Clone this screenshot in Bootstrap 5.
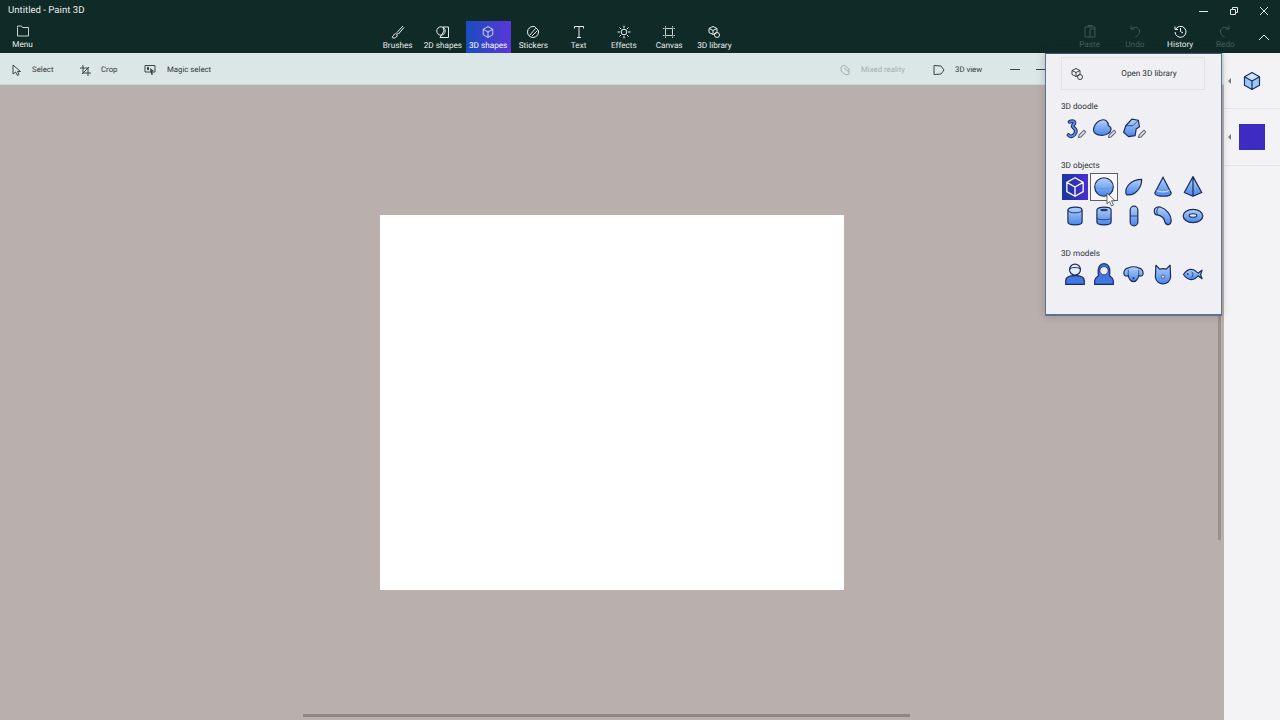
<!DOCTYPE html>
<html lang="en">
<head>
<meta charset="UTF-8">
<title>Untitled - Paint 3D</title>
<link href="https://cdn.jsdelivr.net/npm/bootstrap@5.3.0/dist/css/bootstrap.min.css" rel="stylesheet">
<style>
html, body { height: 100%; overflow: hidden; }
body { font-family: Roboto, "Liberation Sans", sans-serif; font-size: 8.2px; background: #b9afac; color: #23272b; text-rendering: geometricPrecision; }
.app-shell { width: 1280px; height: 720px; position: relative; }
.top-bar { height: 53px; background: #0f2a27; color: #e8eeec; }
.title-row { height: 21px; padding-left: 8px; padding-top: 1px; font-size: 9.6px; }
.win-btn { width: 30px; }
.rib-row { height: 32px; }
.rib-left { width: 375px; }
.rib-center { width: 362px; }
.rib-center .rib-btn { padding-top: 4px; }
.rib-btn { width: 45.25px; height: 32px; padding-top: 3px; line-height: 11px; color: #e8eeec; white-space: nowrap; }
.rib-btn svg { display: block; height: 14px; width: 16px; margin-bottom: 2px; }
.rib-btn.is-active { background: linear-gradient(90deg, #1a4dbd, #5a36d9); color: #fff; }
.rib-btn.is-off { color: #44605b; }
.rib-right { margin-left: 330px; }
.chev-box { margin-left: 10px; padding-top: 12px; }
.work-row { height: 667px; }
.main-col { width: 1224px; }
.tool-bar { height: 32px; background: #dbe6e6; border-bottom: 1px solid #cfd3d2; color: #31383c; padding-left: 8px; padding-right: 178px; font-size: 7.8px; }
.tool-item { height: 31px; padding-top: 3px; }
.tool-icon { width: 14px; margin-right: 10px; display: flex; justify-content: center; }
.tool-off { color: #a4afaf; }
.zoom-dash { width: 10px; height: 1px; background: #3b4347; margin-top: 1px; }
.canvas-pane { height: 635px; position: relative; }
.paper-sheet { width: 464px; height: 375px; background: #fff; }
.h-scroll { position: absolute; left: 303px; top: 629px; width: 607px; height: 3px; background: #8f8785; }
.v-scroll { position: absolute; left: 1218px; top: 230px; width: 3px; height: 225px; background: #9a908d; }
.side-pane { width: 56px; background: #f3f3f6; }
.side-block { position: relative; border-bottom: 1px solid #e6e6ea; }
.side-arrow { position: absolute; left: 4px; top: 50%; margin-top: -3px; width: 0; height: 0; border-style: solid; border-width: 3px 3px 3px 0; border-color: transparent #7a7f85 transparent transparent; }
.swatch-box { width: 26px; height: 26px; background: #3d2bc4; border: 1px solid #3b2fa8; }
.shape-pop { position: absolute; left: 1045px; top: 53px; width: 177px; height: 263px; background: #f0f0f4; border: 1px solid #5d7290; border-bottom-width: 2px; border-top-color: #40587a; padding: 3px 16px 0 15px; box-shadow: 0 0 8px rgba(60,50,50,.25); color: #2b3034; }
.lib-btn { width: 144px; height: 33px; border: 1px solid #e3e3e7; position: relative; padding-left: 32px; padding-top: 1px; }
.lib-btn svg { position: absolute; left: 8px; top: 9px; }
.pop-head { height: 12px; line-height: 12px; }
.icon-grid { display: grid; grid-template-columns: repeat(5, 26px); column-gap: 3.4px; row-gap: 3px; margin-left: 1px; }
.icon-cell { width: 26px; height: 26px; display: flex; align-items: center; justify-content: center; }
.icon-cell svg { width: 24px; height: 24px; }
.icon-cell svg.icon-small { width: 21px; height: 21px; }
.icon-cell.is-picked { background: linear-gradient(90deg, #17379f, #4a2fd0); }
.icon-cell.is-hover { outline: 1px solid #5b5f68; background: #f8f8fa; }
.mouse-arrow { position: absolute; left: 1106px; top: 192px; }
</style>
</head>
<body>
<svg width="0" height="0" class="position-absolute">
  <defs>
    <linearGradient id="blu" x1="0" y1="0" x2="0" y2="1"><stop offset="0" stop-color="#b2d2f8"/><stop offset="1" stop-color="#4a86ea"/></linearGradient>
    <symbol id="cube" viewBox="0 0 22 22"><path d="M11 2.500 18.500 6.700V15.300L11 19.500 3.500 15.300V6.700Z M3.500 6.700 11 11 18.500 6.700 M11 11V19.500" fill="none" stroke="currentColor" stroke-width="1.200" stroke-linejoin="round"/></symbol>
    <symbol id="lib" viewBox="0 0 14 14"><path d="M6 1.500 10 3.500V7.500L6 9.500 2 7.500V3.500Z M2 3.500 6 5.500 10 3.500 M6 5.500V9.500" fill="none" stroke="currentColor" stroke-width="1"/><circle cx="10" cy="10" r="2.500" fill="none" stroke="currentColor"/></symbol>
    <symbol id="pen" viewBox="0 0 8 8"><path d="M1 7 1.500 5 5.500 1 7 2.500 3 6.500Z" fill="#e4e4ea" stroke="#666b76" stroke-width=".9"/></symbol>
  </defs>
</svg>

<div class="app-shell">
  <header class="top-bar">
    <div class="title-row d-flex justify-content-between align-items-center">
      <span>Untitled - Paint 3D</span>
      <div class="d-flex align-items-center">
        <div class="win-btn d-flex justify-content-center"><svg width="10" height="10"><path d="M0 5.500H9" stroke="#dfe6e4"/></svg></div>
        <div class="win-btn d-flex justify-content-center"><svg width="10" height="10"><path d="M1.500 3.500H6.500V8.500H1.500Z M3.500 3V1.500H8.500V6.500H7" fill="none" stroke="#dfe6e4"/></svg></div>
        <div class="win-btn d-flex justify-content-center" style="margin-right:1px"><svg width="10" height="10"><path d="M1 1 9 9M9 1 1 9" stroke="#dfe6e4"/></svg></div>
      </div>
    </div>
    <div class="rib-row d-flex">
      <div class="rib-left">
        <div class="rib-btn d-flex flex-column align-items-center"><svg viewBox="0 0 16 14"><path d="M2.500 3.500V2H6.500L7.500 3.500H13.500V12H2.500Z" fill="none" stroke="#c9d2d0"/></svg>Menu</div>
      </div>
      <nav class="rib-center d-flex">
        <div class="rib-btn d-flex flex-column align-items-center"><svg viewBox="0 0 16 14"><path d="M13 1 7 7.500 M4 13C2.500 13 2 12.500 2 12 3.500 11.500 3.500 10 4.500 9 6 8 8 9.500 7 11 6.500 12.500 5 13 4 13Z M7 7.500 8.500 9 14 2.500" fill="none" stroke="#e8eeec"/></svg>Brushes</div>
        <div class="rib-btn d-flex flex-column align-items-center"><svg viewBox="0 0 16 14"><circle cx="6" cy="6" r="4.200" fill="none" stroke="#e8eeec"/><path d="M8 2H13.500V12.500H5L9 6Z" fill="none" stroke="#e8eeec"/></svg>2D shapes</div>
        <div class="rib-btn is-active d-flex flex-column align-items-center"><svg viewBox="0 0 22 22"><use href="#cube" color="#fff"/></svg>3D shapes</div>
        <div class="rib-btn d-flex flex-column align-items-center"><svg viewBox="0 0 16 14"><path d="M8 1.500A5.500 5.500 0 1 0 13.500 7 L13.500 5.500 9.500 1.500Z M4.500 10.500 10.500 3.500 M7 11 12.500 5.500" fill="none" stroke="#e8eeec"/></svg>Stickers</div>
        <div class="rib-btn d-flex flex-column align-items-center"><svg viewBox="0 0 16 14"><path d="M3.500 3.500V1.500H12.500V3.500 M8 1.500V12.500 M6 12.500H10" fill="none" stroke="#e8eeec"/></svg>Text</div>
        <div class="rib-btn d-flex flex-column align-items-center"><svg viewBox="0 0 16 14"><circle cx="8" cy="7" r="2.800" fill="none" stroke="#e8eeec"/><path d="M8 .5V3M8 11V13.500M1.500 7H4M12 7H14.500M3.500 2.500 5.200 4.200M10.800 9.800 12.500 11.500M12.500 2.500 10.800 4.200M5.200 9.800 3.500 11.500" stroke="#e8eeec"/></svg>Effects</div>
        <div class="rib-btn d-flex flex-column align-items-center"><svg viewBox="0 0 16 14"><path d="M4.500 3.500H11.500V10.500H4.500Z" fill="none" stroke="#c9d2d0"/><path d="M4.500 1V2.500M11.500 1V2.500M4.500 11.500V13M11.500 11.500V13M2 3.500H3.500M2 10.500H3.500M12.500 3.500H14M12.500 10.500H14" stroke="#c9d2d0"/></svg>Canvas</div>
        <div class="rib-btn d-flex flex-column align-items-center"><svg viewBox="0 0 14 14"><use href="#lib" color="#e8eeec"/></svg>3D library</div>
      </nav>
      <div class="rib-right d-flex flex-grow-1">
        <div class="rib-btn is-off d-flex flex-column align-items-center"><svg viewBox="0 0 16 14"><path d="M3 3H13V13H3Z M6 3V1.500H10V3 M8 5V13 M8 5H13" fill="none" stroke="#3d5954"/></svg>Paste</div>
        <div class="rib-btn is-off d-flex flex-column align-items-center"><svg viewBox="0 0 16 14"><path d="M4 1.500V5H7.500 M4.500 5C6 2.500 12 2.500 12.500 7 12.800 9.500 11 12 8.500 13" fill="none" stroke="#3d5954"/></svg>Undo</div>
        <div class="rib-btn d-flex flex-column align-items-center"><svg viewBox="0 0 16 14"><path d="M3 2.500V5.500H6 M3.500 5.500A5.500 5.500 0 1 1 3 8 M8.500 4V7.500L11 9" fill="none" stroke="#f2f5f4"/></svg>History</div>
        <div class="rib-btn is-off d-flex flex-column align-items-center"><svg viewBox="0 0 16 14"><path d="M12 1.500V5H8.500 M11.500 5C10 2.500 4 2.500 3.500 7 3.200 9.500 5 12 7.500 13" fill="none" stroke="#3d5954"/></svg>Redo</div>
        <div class="chev-box"><svg width="12" height="9" class="d-block"><path d="M1 7 6 2 11 7" fill="none" stroke="#f2f5f4"/></svg></div>
      </div>
    </div>
  </header>

  <div class="work-row d-flex">
    <div class="main-col">
      <div class="tool-bar d-flex justify-content-between">
        <div class="d-flex">
          <div class="tool-item d-flex align-items-center" style="width:70px"><span class="tool-icon"><svg width="10" height="12" class="ms-1"><path d="M1 1V10L3.500 8 5.500 11.500 7 10.500 5.500 7.500H8.500Z" fill="none" stroke="#3b4347"/></svg></span>Select</div>
          <div class="tool-item d-flex align-items-center" style="width:65px"><span class="tool-icon" style="margin-right:9px"><svg width="11" height="11"><path d="M3 0V8H11 M0 3H8V11 M2 9 9 2" fill="none" stroke="#3b4347"/></svg></span>Crop</div>
          <div class="tool-item d-flex align-items-center"><span class="tool-icon"><svg width="12" height="12"><path d="M1 1.500H11V8H1Z" fill="none" stroke="#3b4347"/><path d="M6 4 10 7 8 7.500 9 10.500 7.500 11 6.500 8Z M3 3H5V6H3Z" fill="#3b4347"/></svg></span>Magic select</div>
        </div>
        <div class="d-flex align-items-center">
          <div class="tool-item tool-off d-flex align-items-center" style="width:94px"><span class="tool-icon" style="margin-right:9px"><svg width="10" height="12"><path d="M1 3 4 1 9 5V10L6 11 1 7Z M4 4 9 8" fill="none" stroke="#a4afaf"/></svg></span>Mixed reality</div>
          <div class="tool-item d-flex align-items-center" style="width:78px"><span class="tool-icon" style="margin-right:9px"><svg width="12" height="12"><path d="M1 1.500 8 2 11 6 8 10 1 10.500Z" fill="none" stroke="#3b4347"/></svg></span>3D view</div>
          <div class="zoom-dash"></div>
          <div class="zoom-dash ms-3"></div>
        </div>
      </div>
      <main class="canvas-pane d-flex align-items-center justify-content-center">
        <div class="paper-sheet"></div>
        <div class="h-scroll"></div>
        <div class="v-scroll"></div>
      </main>
    </div>
    <aside class="side-pane">
      <div class="side-block d-flex align-items-center justify-content-center" style="height:56px">
        <span class="side-arrow"></span>
        <svg width="22" height="22" viewBox="0 0 22 22"><path d="M11 2.500 18.500 6.700V15.300L11 19.500 3.500 15.300V6.700Z" fill="#9cc6f5"/><path d="M3.500 6.700 11 11 18.500 6.700 11 2.500Z" fill="#cfe3fa"/><use href="#cube" color="#16305f"/></svg>
      </div>
      <div class="side-block d-flex align-items-center justify-content-center" style="height:57px">
        <span class="side-arrow"></span>
        <div class="swatch-box"></div>
      </div>
    </aside>
  </div>

  <div class="shape-pop">
    <div class="lib-btn d-flex align-items-center justify-content-center">
      <svg width="14" height="14"><use href="#lib" color="#3b3f45"/></svg>
      <span>Open 3D library</span>
    </div>
    <div class="pop-head" style="margin-top:11px">3D doodle</div>
    <div class="icon-grid" style="margin-top:3px">
      <div class="icon-cell"><svg viewBox="0 0 22 22"><path d="M6 4.500C9.500 2.500 12 5 9.500 7 6.500 9.500 13.500 10 11.500 14.500 10 18 6.500 18.500 5 16.500" fill="none" stroke="#1c2b5c" stroke-width="3.400" stroke-linecap="round"/><path d="M6 4.500C9.500 2.500 12 5 9.500 7 6.500 9.500 13.500 10 11.500 14.500 10 18 6.500 18.500 5 16.500" fill="none" stroke="#5a90ea" stroke-width="1.600" stroke-linecap="round"/><use href="#pen" x="13" y="11" width="9" height="9"/></svg></div>
      <div class="icon-cell"><svg viewBox="0 0 22 22"><path d="M8 3C12 1.500 15 4 15 8 18 9 18.500 13 15 15 11 18 4 17 2 14 0 10 4 4 8 3Z" fill="url(#blu)" stroke="#1c2b5c" stroke-width="1.100"/><use href="#pen" x="14" y="11" width="9" height="9"/></svg></div>
      <div class="icon-cell"><svg viewBox="0 0 22 22"><path d="M9 2 15 3 16 9 13 11 12 17 6 18 1.500 14 3.500 8Z" fill="url(#blu)" stroke="#1c2b5c" stroke-width="1.100" stroke-linejoin="round"/><path d="M15 3 10 8 3.500 8" fill="none" stroke="#1c2b5c" stroke-width=".7"/><use href="#pen" x="14" y="11" width="9" height="9"/></svg></div>
    </div>
    <div class="pop-head" style="margin-top:18px">3D objects</div>
    <div class="icon-grid" style="margin-top:2px">
      <div class="icon-cell is-picked"><svg viewBox="0 0 22 22"><use href="#cube" color="#fff"/></svg></div>
      <div class="icon-cell is-hover"><svg viewBox="0 0 22 22"><circle cx="11" cy="11" r="8.500" fill="url(#blu)" stroke="#1c2b5c" stroke-width="1.100"/><path d="M3 11C6 13 16 13 19 11" fill="none" stroke="#5f93e6" stroke-width=".8"/></svg></div>
      <div class="icon-cell"><svg viewBox="0 0 22 22"><path d="M4 18C1.500 11 9 4 18 4 18.500 11 12 20 4 18Z" fill="url(#blu)" stroke="#1c2b5c" stroke-width="1.100"/></svg></div>
      <div class="icon-cell"><svg viewBox="0 0 22 22"><path d="M11 2 18.500 16.500C18.500 20.500 3.500 20.500 3.500 16.500Z" fill="url(#blu)" stroke="#1c2b5c" stroke-width="1.100"/><path d="M5 14C8 16 14 16 17 14" fill="none" stroke="#fff" stroke-width=".7"/></svg></div>
      <div class="icon-cell"><svg viewBox="0 0 22 22"><path d="M11 1.500 19 16 11 19.500 3 16Z M11 1.500V19.500" fill="url(#blu)" stroke="#1c2b5c" stroke-width="1.100" stroke-linejoin="round"/></svg></div>
      <div class="icon-cell"><svg viewBox="0 0 22 22"><path d="M4.500 5.500V16.500C4.500 20 17.500 20 17.500 16.500V5.500C17.500 2 4.500 2 4.500 5.500Z" fill="url(#blu)" stroke="#1c2b5c" stroke-width="1.100"/><path d="M4.500 5.500C4.500 9 17.500 9 17.500 5.500" fill="none" stroke="#1c2b5c" stroke-width=".8"/></svg></div>
      <div class="icon-cell"><svg viewBox="0 0 22 22"><path d="M4.500 5.500V16.500C4.500 20 17.500 20 17.500 16.500V5.500C17.500 2 4.500 2 4.500 5.500Z" fill="url(#blu)" stroke="#1c2b5c" stroke-width="1.100"/><ellipse cx="11" cy="5.500" rx="3.500" ry="1.200" fill="#24386e"/><path d="M4.500 13C7 15 15 15 17.500 13" fill="none" stroke="#1c2b5c" stroke-width=".7"/></svg></div>
      <div class="icon-cell"><svg viewBox="0 0 22 22"><rect x="7.500" y="2" width="7" height="18" rx="3.500" fill="url(#blu)" stroke="#1c2b5c" stroke-width="1.100"/><path d="M7.500 11H14.500" stroke="#1c2b5c" stroke-width=".7"/></svg></div>
      <div class="icon-cell"><svg viewBox="0 0 22 22"><path d="M3 6C3 3 7 2 9 3 14 4.500 18.500 10 18.500 15 18.500 20 13.500 20 12.500 16 12 13 9.500 10.500 5.500 10 3.500 10 3 8 3 6Z" fill="url(#blu)" stroke="#1c2b5c" stroke-width="1.100"/><path d="M7 3C5 5 5 8 6 10" fill="none" stroke="#1c2b5c" stroke-width=".8"/></svg></div>
      <div class="icon-cell"><svg viewBox="0 0 22 22"><ellipse cx="11" cy="11" rx="9" ry="6" fill="url(#blu)" stroke="#1c2b5c" stroke-width="1.100"/><ellipse cx="11" cy="10.500" rx="3.500" ry="1.600" fill="#dfe9f8" stroke="#1c2b5c"/></svg></div>
    </div>
    <div class="pop-head" style="margin-top:19px">3D models</div>
    <div class="icon-grid" style="margin-top:1px">
      <div class="icon-cell"><svg viewBox="0 0 22 22"><path d="M2.500 20.500V17C2.500 14 6 12.500 11 12.500 16 12.500 19.500 14 19.500 17V20.500Z" fill="#3f78e4" stroke="#1c2b5c" stroke-width="1.100"/><circle cx="11" cy="7" r="5" fill="#e9eef8" stroke="#1c2b5c" stroke-width="1.100"/><path d="M6 6.500C8 4.500 14 4.500 16 6.500" fill="none" stroke="#1c2b5c"/></svg></div>
      <div class="icon-cell"><svg viewBox="0 0 22 22"><path d="M2.500 20.500V17C2.500 14.500 5 13.500 6 12.500 4.500 4 8 1.500 11 1.500S17.500 4 16 12.500C17 13.500 19.500 14.500 19.500 17V20.500Z" fill="#3f78e4" stroke="#1c2b5c" stroke-width="1.100"/><circle cx="11" cy="8" r="3.800" fill="#e9eef8" stroke="#1c2b5c" stroke-width=".8"/></svg></div>
      <div class="icon-cell"><svg class="icon-small" viewBox="0 0 22 22"><path d="M6 4C8 2.500 14 2.500 16 4 19 4 21.500 7 21 10.500 20.500 13 18 13 16.500 12 16 16 13 18.500 11 18.500S6 16 5.500 12C4 13 1.500 13 1 10.500 .5 7 3 4 6 4Z" fill="url(#blu)" stroke="#1c2b5c" stroke-width="1.200"/><path d="M5.500 12V6M16.500 12V6" fill="none" stroke="#1c2b5c" stroke-width=".7"/><circle cx="11" cy="15" r="1" fill="#1c2b5c"/></svg></div>
      <div class="icon-cell"><svg viewBox="0 0 22 22"><path d="M4.500 3 8 6.500C10 6 12 6 14 6.500L17.500 3 18 14C17.500 18 14 20 11 20S4.500 18 4 14Z" fill="url(#blu)" stroke="#1c2b5c" stroke-width="1.100" stroke-linejoin="round"/><circle cx="11" cy="13.500" r="1.500" fill="#dfe9f8" stroke="#1c2b5c" stroke-width=".6"/></svg></div>
      <div class="icon-cell"><svg class="icon-small" viewBox="0 0 22 22"><path d="M1.500 11C5 6 9 5 12 6 14 7 16 9 17 9.500L21 6.500 19.500 11 21 15.500 17 12.500C16 13.500 14 15.500 12 16 9 17 5 16 1.500 11Z" fill="url(#blu)" stroke="#1c2b5c" stroke-width="1.200" stroke-linejoin="round"/><circle cx="6" cy="10.500" r=".9" fill="#1c2b5c"/><path d="M10 8C12 10 12 12 10 14" fill="none" stroke="#1c2b5c" stroke-width=".8"/></svg></div>
    </div>
  </div>

  <svg class="mouse-arrow" width="11" height="16"><path d="M1 1V12L3.500 9.500 5.500 14 7.500 13 5.500 8.800H9Z" fill="#fff" stroke="#444" stroke-width=".8"/></svg>
</div>
</body>
</html>
